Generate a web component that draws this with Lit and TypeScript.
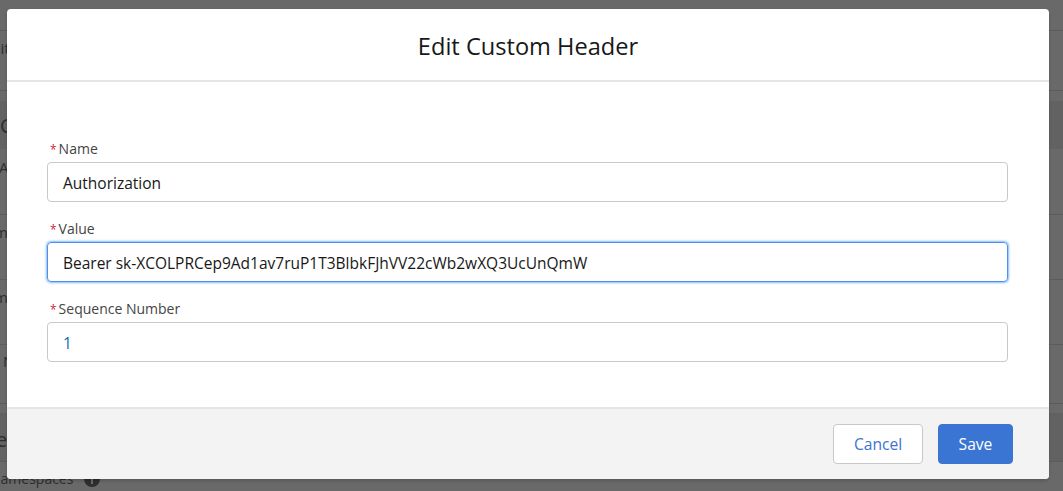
import { LitElement, html, css } from 'lit';
import { customElement } from 'lit/decorators.js';

const fields = [
  { label: 'Name', value: 'Authorization', focus: false, num: false },
  { label: 'Value', value: 'Bearer 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', focus: true, num: false },
  { label: 'Sequence Number', value: '1', focus: false, num: true },
];

// what shows of the page behind the modal
const lines = [30, 90, 214, 279, 344, 403, 461];
const bands = [
  { top: 101, height: 48 },
  { top: 413, height: 49 },
];
const frags = [
  { text: 'Edit', x: -17, y: 39, size: 15 },
  { text: 'C', x: 0, y: 117, size: 20 },
  { text: 'A', x: -1, y: 158, size: 15 },
  { text: 'm', x: -6, y: 223, size: 15 },
  { text: 'm', x: -6, y: 288, size: 15 },
  { text: 'N', x: 3, y: 352, size: 15 },
  { text: 'ec', x: -4, y: 431, size: 20 },
  { text: 'Namespaces', x: -10, y: 470, size: 14 },
];

@customElement('app-root')
export class AppRoot extends LitElement {
  static styles = css`
    :host {
      display: block;
      width: 1063px;
      height: 491px;
      position: relative;
      overflow: hidden;
      background: #696969;
      font-family: 'Open Sans', 'Noto Sans', sans-serif;
    }
    .page {
      position: absolute;
      inset: 0;
    }
    .band { position: absolute; left: 0; right: 0; background: #626262; }
    .line { position: absolute; left: 0; right: 0; height: 1px; background: #5c5c5c; }
    .frag { position: absolute; color: #2e2e2e; white-space: nowrap; line-height: 18px; }
    .dot {
      position: absolute;
      left: 84px;
      top: 471px;
      width: 16px;
      height: 16px;
      border-radius: 50%;
      background: #2e2e2e;
    }
    .dot::after {
      content: '';
      position: absolute;
      left: 7px;
      top: 8px;
      width: 2px;
      height: 5px;
      background: #696969;
    }
    .shell {
      position: relative;
      display: flex;
      flex-direction: column;
      box-sizing: border-box;
      margin-left: 7px;
      width: 1042px;
      height: 470px;
      top: 9px;
      background: #fff;
      border-radius: 4px;
      box-shadow: 0 2px 3px rgba(0, 0, 0, 0.16);
    }
    header {
      box-sizing: border-box;
      height: 73px;
      padding-top: 2px;
      border-bottom: 2px solid #e5e5e5;
      display: flex;
      align-items: center;
      justify-content: center;
      font-size: 23.6px;
      color: #181818;
    }
    .body {
      flex: 1;
      display: flex;
      flex-direction: column;
      gap: 18px;
      padding: 58px 41px 0 40px;
    }
    .field { display: flex; flex-direction: column; gap: 4px; }
    label { font-size: 14px; line-height: 18px; color: #444; padding-left: 3px; }
    label b { color: #d8203c; font-size: 12px; line-height: 1; font-weight: 400; margin-right: 2px; }
    .input {
      box-sizing: border-box;
      height: 40px;
      padding: 1px 15px 0;
      border: 1px solid #c9c9c9;
      border-radius: 4px;
      display: flex;
      align-items: center;
      font-size: 15.5px;
      color: #181818;
    }
    .input.focus { border-color: #4f8ff0; box-shadow: 0 0 3px #0176d3; }
    .input.num { color: #0b6cab; }
    footer {
      box-sizing: border-box;
      height: 72px;
      background: #f3f3f3;
      border-top: 2px solid #e5e5e5;
      border-radius: 0 0 4px 4px;
      display: flex;
      align-items: center;
      justify-content: flex-end;
      gap: 15px;
      padding: 0 36px 0 0;
    }
    button {
      box-sizing: border-box;
      height: 40px;
      border-radius: 4px;
      font: inherit;
      font-size: 15.6px;
    }
    .cancel { width: 90px; background: #fff; border: 1px solid #c9c9c9; color: #3a75d4; }
    .save { width: 75px; background: #3a75d4; border: 1px solid #3a75d4; color: #fff; }
  `;

  render() {
    return html`
      <div class="page">
        ${bands.map((b) => html`<div class="band" style="top:${b.top}px;height:${b.height}px"></div>`)}
        ${lines.map((y) => html`<div class="line" style="top:${y}px"></div>`)}
        ${frags.map((f) => html`<span class="frag" style="left:${f.x}px;top:${f.y}px;font-size:${f.size}px">${f.text}</span>`)}
        <div class="dot"></div>
      </div>
      <div class="shell">
        <header>Edit Custom Header</header>
        <div class="body">
          ${fields.map(
            (f) => html`
              <div class="field">
                <label><b>*</b>${f.label}</label>
                <div class="input ${f.focus ? 'focus' : ''} ${f.num ? 'num' : ''}">${f.value}</div>
              </div>
            `
          )}
        </div>
        <footer>
          <button class="cancel">Cancel</button>
          <button class="save">Save</button>
        </footer>
      </div>
    `;
  }
}
